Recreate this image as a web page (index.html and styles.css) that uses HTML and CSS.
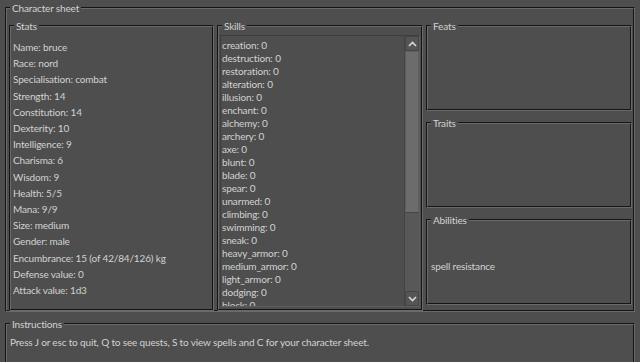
FILE: index.html
```html
<!DOCTYPE html>
<html lang="en">
<head>
    <meta charset="UTF-8">
    <title>Character sheet</title>
    <link rel="stylesheet" href="styles.css">
</head>
<body>
    <fieldset class="group sheet">
        <legend>Character sheet</legend>
        <div class="columns">
            <fieldset class="group stats">
                <legend>Stats</legend>
                <div class="lines">
                    <div>Name: bruce</div>
                    <div>Race: nord</div>
                    <div>Specialisation: combat</div>
                    <div>Strength: 14</div>
                    <div>Constitution: 14</div>
                    <div>Dexterity: 10</div>
                    <div>Intelligence: 9</div>
                    <div>Charisma: 6</div>
                    <div>Wisdom: 9</div>
                    <div>Health: 5/5</div>
                    <div>Mana: 9/9</div>
                    <div>Size: medium</div>
                    <div>Gender: male</div>
                    <div>Encumbrance: 15 (of 42/84/126) kg</div>
                    <div>Defense value: 0</div>
                    <div>Attack value: 1d3</div>
                </div>
            </fieldset>

            <fieldset class="group skills">
                <legend>Skills</legend>
                <div class="listbox">
                    <div class="items">
                        <div>creation: 0</div>
                        <div>destruction: 0</div>
                        <div>restoration: 0</div>
                        <div>alteration: 0</div>
                        <div>illusion: 0</div>
                        <div>enchant: 0</div>
                        <div>alchemy: 0</div>
                        <div>archery: 0</div>
                        <div>axe: 0</div>
                        <div>blunt: 0</div>
                        <div>blade: 0</div>
                        <div>spear: 0</div>
                        <div>unarmed: 0</div>
                        <div>climbing: 0</div>
                        <div>swimming: 0</div>
                        <div>sneak: 0</div>
                        <div>heavy_armor: 0</div>
                        <div>medium_armor: 0</div>
                        <div>light_armor: 0</div>
                        <div>dodging: 0</div>
                        <div>block: 0</div>
                    </div>
                    <div class="scrollbar">
                        <div class="arrow">
                            <svg width="9" height="6" viewBox="0 0 9 6"><path d="M1 5 L4.5 1.5 L8 5" fill="none" stroke="#d8d8d8" stroke-width="1.6"/></svg>
                        </div>
                        <div class="thumb"></div>
                        <div class="track"></div>
                        <div class="arrow">
                            <svg width="9" height="6" viewBox="0 0 9 6"><path d="M1 1 L4.5 4.5 L8 1" fill="none" stroke="#d8d8d8" stroke-width="1.6"/></svg>
                        </div>
                    </div>
                </div>
            </fieldset>

            <div class="side">
                <fieldset class="group small">
                    <legend>Feats</legend>
                </fieldset>
                <fieldset class="group small">
                    <legend>Traits</legend>
                </fieldset>
                <fieldset class="group small abilities">
                    <legend>Abilities</legend>
                    <div>spell resistance</div>
                </fieldset>
            </div>
        </div>
    </fieldset>

    <fieldset class="group instructions">
        <legend>Instructions</legend>
        <div>Press J or esc to quit, Q to see quests, S to view spells and C for your character sheet.</div>
    </fieldset>
</body>
</html>
```

FILE: styles.css
```css
body {
    margin: 0;
    width: 640px;
    height: 362px;
    background: #4e4e4e;
    color: #d2d2d2;
    font-family: Lato, "Liberation Sans", sans-serif;
    font-size: 10px;
    letter-spacing: -0.15px;
    overflow: hidden;
}
.group {
    border: 2px groove #6a6a6a;
    margin: 0;
    padding: 0;
    min-width: 0;
}
.group legend {
    padding: 0 2px;
    margin-left: 3px;
    line-height: 12px;
}
.sheet {
    margin: 2px 5px 0 5px;
    height: 310px;
    box-sizing: border-box;
}
.columns {
    display: grid;
    grid-template-columns: 205px 206px 1fr;
    gap: 3px;
    padding: 6px 1px 0 2px;
}
.stats, .skills {
    height: 291px;
    box-sizing: border-box;
}
.lines {
    padding: 7px 0 0 2px;
    line-height: 16.2px;
}
.listbox {
    display: flex;
    margin: 3px 1px 0 1px;
    height: 270px;
    border: 1px solid #3e3e3e;
    border-right-color: #5e5e5e;
    border-bottom-color: #5e5e5e;
    overflow: hidden;
}
.items {
    flex: 1;
    padding: 3px 0 0 1px;
    line-height: 13px;
}
.scrollbar {
    width: 14px;
    display: flex;
    flex-direction: column;
    background: #585858;
    border-left: 1px solid #444;
}
.arrow {
    height: 13px;
    display: flex;
    align-items: center;
    justify-content: center;
    background: #555;
    border: 1px solid #454545;
}
.thumb {
    height: 160px;
    background: #6c6c6c;
    border: 1px solid #5e5e5e;
    border-bottom-color: #454545;
}
.track {
    flex: 1;
}
.side {
    display: flex;
    flex-direction: column;
    gap: 6px;
}
.small {
    height: 91px;
    box-sizing: border-box;
}
.abilities div {
    padding: 34px 0 0 3px;
}
.instructions {
    margin: 6px 5px 0 5px;
    height: 46px;
    box-sizing: border-box;
}
.instructions div {
    padding: 6px 0 0 3px;
}
```
